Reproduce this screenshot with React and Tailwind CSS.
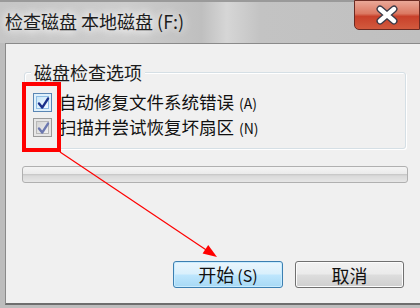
import React from "react";

const cjk = { fontFamily: '"Noto Sans CJK SC", "Microsoft YaHei", sans-serif' };

function Check({ active }) {
  return (
    <div
      className={
        "relative w-[19px] h-[19px] shrink-0 border " +
        (active ? "border-[#5a86b4] bg-[#dff0fb]" : "border-[#9a9a9a] bg-[#e6e6e6]")
      }
    >
      <div
        className={
          "absolute inset-[2px] border " +
          (active
            ? "border-[#8fbde4] bg-gradient-to-br from-[#c9e6f8] to-[#f4fbff]"
            : "border-[#b8b8b8] bg-gradient-to-br from-[#d4d4d4] to-[#f2f2f2]")
        }
      />
      <svg className="absolute inset-0" width="19" height="19" viewBox="0 0 19 19">
        <path
          d="M5 9.5 L8.2 13.6 L14 4.6"
          fill="none"
          stroke={active ? "#1a2f8a" : "#6c78b0"}
          strokeWidth="2.4"
          strokeLinecap="round"
          strokeLinejoin="round"
        />
      </svg>
    </div>
  );
}

export default function App() {
  return (
    <div className="relative w-[420px] h-[308px] overflow-hidden bg-[#bdbdbd] flex flex-col" style={cjk}>
      {/* title bar */}
      <div className="h-[43px] shrink-0 flex items-start relative bg-[linear-gradient(90deg,#c6c6c6_0%,#cdcdcd_30%,#bfbfbf_48%,#d6d6d6_54%,#c3c3c3_62%,#c0c0c0_100%)] border-t-2 border-[#9a9a9a]">
        <div className="pl-[5px] pt-[7px] text-[18px] leading-[24px] text-[#1c1c1c] [text-shadow:0_0_8px_#ffffff,0_0_12px_#ffffff] whitespace-nowrap">
          检查磁盘 本地磁盘 (F:)
        </div>
        <div className="ml-auto mt-[-2px] w-[66px] h-[30px] rounded-bl-[5px] border border-[#6b2a22] bg-[linear-gradient(180deg,#eaa898_0%,#db7862_45%,#c8402a_55%,#d25a3e_100%)] flex items-center justify-center">
          <svg width="26" height="20" viewBox="0 0 26 20">
            <path d="M6 4 L20 16 M20 4 L6 16" stroke="#3a3a48" strokeWidth="7" strokeLinecap="round" />
            <path d="M6 4 L20 16 M20 4 L6 16" stroke="#ffffff" strokeWidth="4.4" strokeLinecap="round" />
          </svg>
        </div>
      </div>

      {/* client area */}
      <div className="ml-[5px] h-[262px] shrink-0 bg-[#f0f0f0] border-l border-t border-[#8a8a8a] border-b-2 border-b-[#6e6e6e] flex flex-col">
        {/* group box */}
        <div className="relative mt-[28px] ml-[18px] mr-[14px] h-[77px] rounded-[3px] border border-[#d5dfe5] shadow-[inset_1px_1px_0_#ffffff,1px_1px_0_#ffffff]">
          <div className="absolute left-[6px] top-[-11px] px-[3px] bg-[#f0f0f0] text-[18px] leading-[20px] text-[#1a1a1a]">
            磁盘检查选项
          </div>
          <div className="pt-[20px] pl-[8px] flex flex-col gap-[6px]">
            <div className="flex items-center h-[19px]">
              <Check active />
              <span className="ml-[7px] text-[17.5px] leading-[19px] text-[#111] whitespace-nowrap">
                自动修复文件系统错误
                <span className="ml-[5px] text-[14px]">(A)</span>
              </span>
            </div>
            <div className="flex items-center h-[19px]">
              <Check />
              <span className="ml-[7px] text-[17.5px] leading-[19px] text-[#111] whitespace-nowrap">
                扫描并尝试恢复坏扇区
                <span className="ml-[5px] text-[14px]">(N)</span>
              </span>
            </div>
          </div>
        </div>

        {/* progress bar */}
        <div className="mt-[17px] ml-[16px] mr-[12px] h-[17px] rounded-[3px] border border-[#b0b0b0] bg-[linear-gradient(180deg,#f4f4f4_0%,#ebebeb_45%,#c9c9c9_50%,#dadada_60%,#e6e6e6_100%)]" />

        {/* buttons */}
        <div className="mt-[78px] flex justify-end gap-[12px] pr-[16px]">
          <button className="w-[110px] h-[27px] rounded-[3px] border border-[#3c7fb1] bg-[linear-gradient(180deg,#eaf6fd_0%,#d9f0fc_48%,#bee6fd_52%,#a7d9f5_100%)] shadow-[inset_0_0_0_1px_#c8ecff] text-[18px] leading-[24px] text-[#111]">
            开始<span className="ml-[3px] text-[16px]">(S)</span>
          </button>
          <button className="w-[109px] h-[27px] rounded-[3px] border border-[#707070] bg-[linear-gradient(180deg,#f2f2f2_0%,#ebebeb_48%,#dddddd_52%,#cfcfcf_100%)] shadow-[inset_0_0_0_1px_#fcfcfc] text-[18px] leading-[24px] text-[#111]">
            取消
          </button>
        </div>
      </div>

      {/* annotation overlays */}
      <div className="absolute left-[22px] top-[82px] w-[39px] h-[70px] border-[4px] border-[#ff0000]" />
      <svg className="absolute inset-0 pointer-events-none" width="420" height="308" viewBox="0 0 420 308">
        <line x1="60" y1="152" x2="207" y2="250.5" stroke="#ff0000" strokeWidth="1.2" />
        <polygon points="217,257 202.6,253.4 208.2,245" fill="#ff0000" />
      </svg>
    </div>
  );
}
